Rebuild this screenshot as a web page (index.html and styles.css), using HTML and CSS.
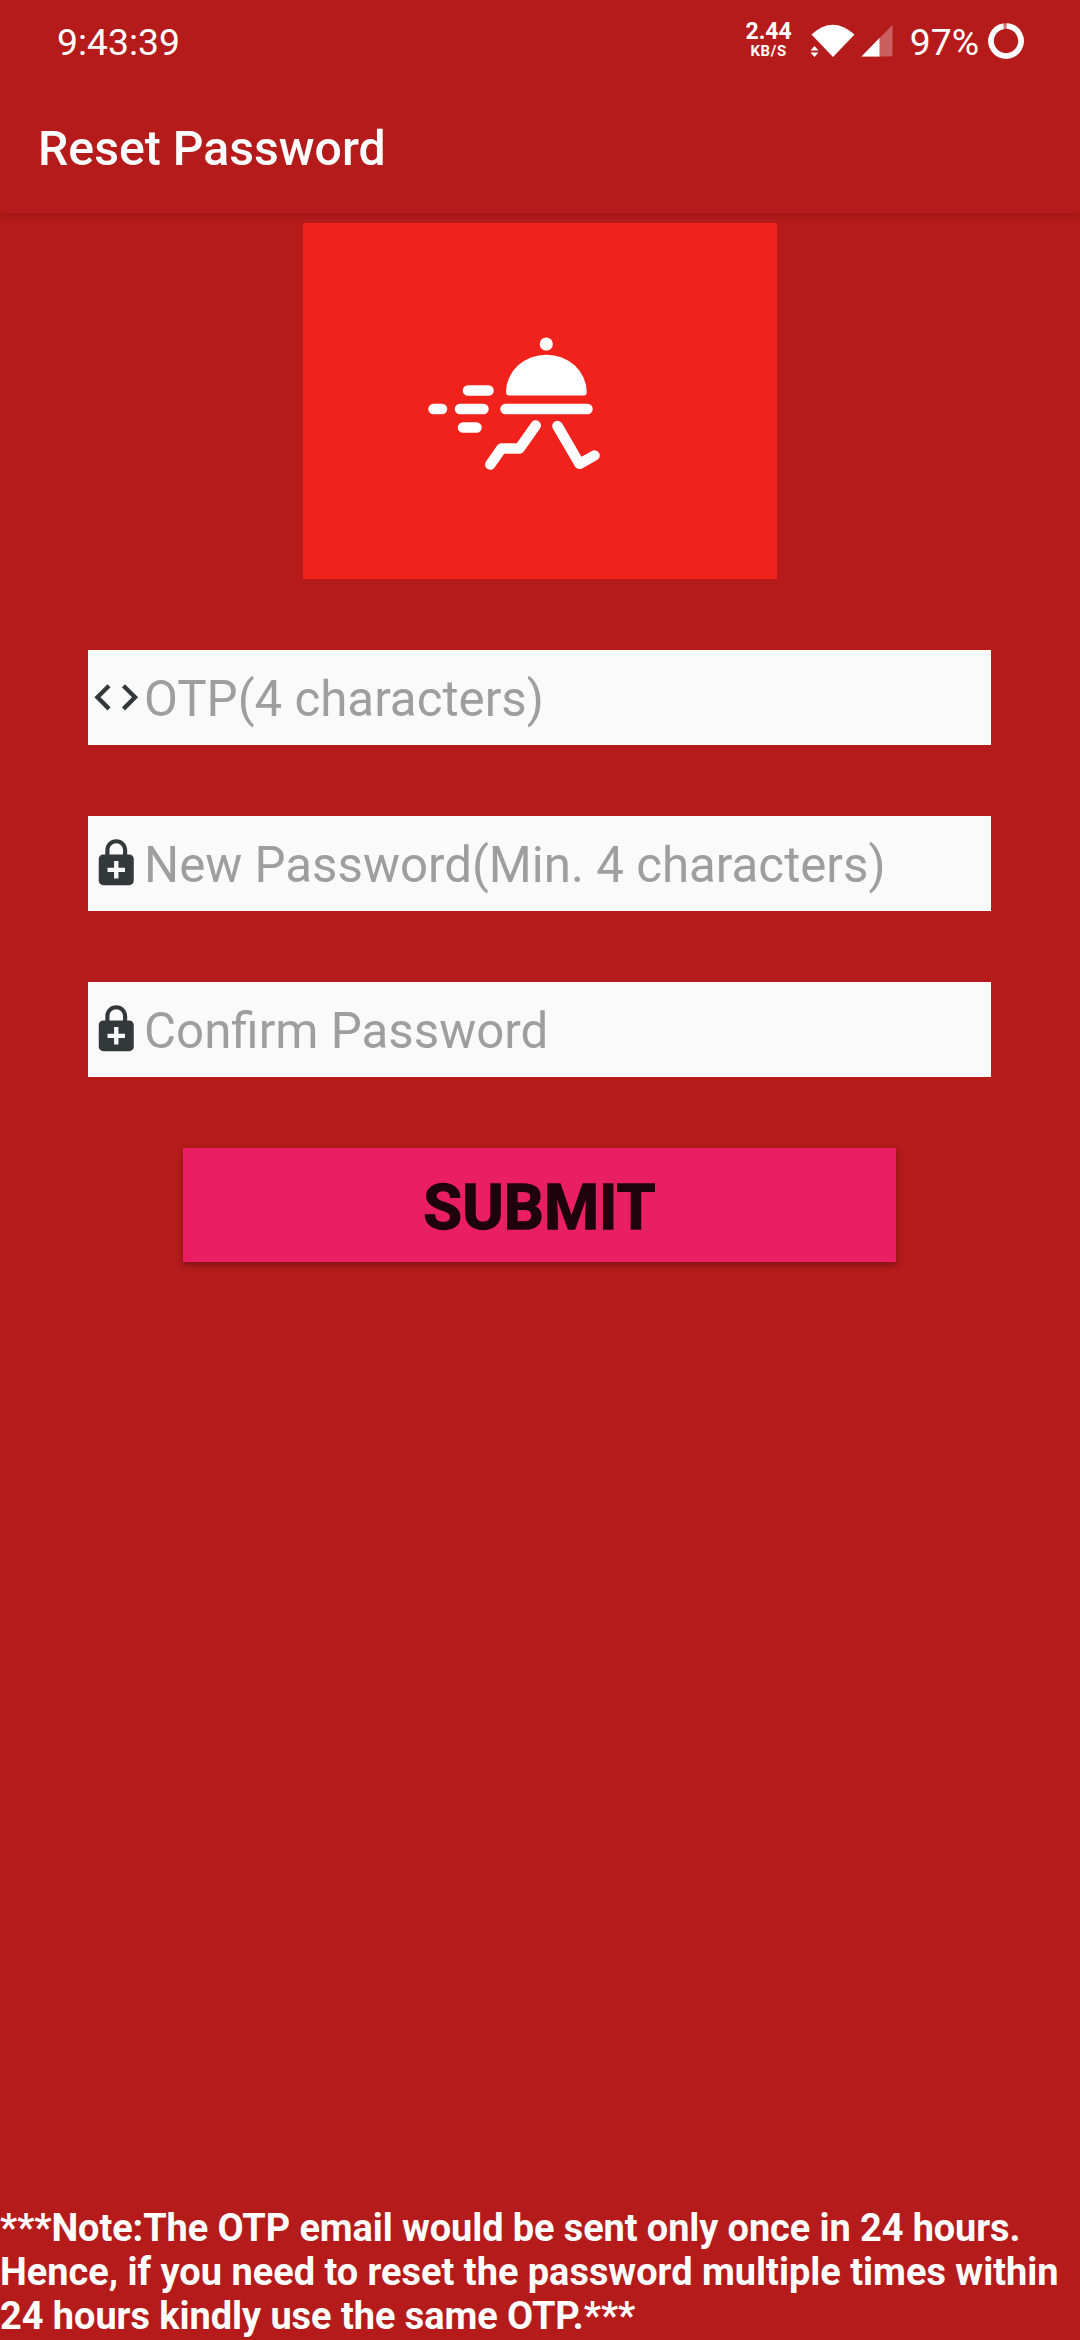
FILE: index.html
```html
<!DOCTYPE html>
<html lang="en">
<head>
<meta charset="utf-8">
<title>Reset Password</title>
<link rel="stylesheet" href="styles.css">
</head>
<body>
<div class="screen">
  <header class="top">
    <div class="status">
      <span class="clock">9:43:39</span>
      <div class="indicators">
        <div class="speed"><span class="speed-value">2.44</span><span class="speed-unit">KB/S</span></div>
        <svg class="wifi" width="46" height="34" viewBox="0 0 46 34" fill="#fff">
          <path d="M1.500 10.500Q22.500 -9 44.500 10.500L23 33Z"/>
          <path d="M0.500 26.500L4.500 22L8.500 26.500ZM0.500 28.500L4.500 33L8.500 28.500Z"/>
        </svg>
        <svg class="signal" width="32" height="32" viewBox="0 0 32 32">
          <path d="M31.500 0V29Q31.500 31.500 29 31.500H0.500Z" fill="#fff" opacity=".3"/>
          <path d="M18.500 13V31.500H0.500Z" fill="#fff"/>
        </svg>
        <span class="percent">97%</span>
        <svg class="battery" width="36" height="36" viewBox="0 0 36 36" fill="none" stroke="#fff" stroke-width="5.600">
          <circle cx="18" cy="18" r="15" opacity=".4"/>
          <path d="M18.700 3A15 15 0 1 1 15.500 3.200"/>
        </svg>
      </div>
    </div>
    <h1 class="title">Reset Password</h1>
  </header>
  <main class="content">
    <div class="logo">
      <svg width="474" height="356" viewBox="0 0 474 356" fill="none" stroke="#fff" stroke-width="10.500" stroke-linecap="round" stroke-linejoin="round">
        <circle cx="243.300" cy="121" r="6.600" fill="#fff" stroke="none"/>
        <path d="M206 172.500Q203 172.500 203 169A40.300 37.300 0 0 1 283.700 169Q283.700 172.500 281 172.500Z" fill="#fff" stroke="none"/>
        <path d="M202.500 186H284.500M165 167.500H185.500M157 186H180.500M130.500 186H139M160 204.500H173.500"/>
        <path d="M232.700 202.500L216.500 225.500H198.500L187.300 241.500M254.500 203L276.500 240.800L291.500 232.500"/>
      </svg>
    </div>
    <form class="form">
      <label class="field">
        <svg class="icon" viewBox="0 0 24 24"><path d="M9.400 16.600L4.800 12l4.600-4.600L8 6l-6 6 6 6 1.400-1.400zm5.200 0l4.600-4.600-4.600-4.600L16 6l6 6-6 6-1.400-1.400z"/></svg>
        <input class="input" type="text" placeholder="OTP(4 characters)">
      </label>
      <label class="field">
        <svg class="icon" viewBox="0 0 24 24"><path d="M18 8h-1V6c0-2.760-2.240-5-5-5S7 3.240 7 6v2H6c-1.100 0-2 .9-2 2v10c0 1.100.9 2 2 2h12c1.100 0 2-.9 2-2V10c0-1.100-.9-2-2-2zM8.900 6c0-1.710 1.390-3.100 3.100-3.100s3.100 1.390 3.100 3.100v2H8.900V6zM16 16h-3v3h-2v-3H8v-2h3v-3h2v3h3v2z"/></svg>
        <input class="input" type="text" placeholder="New Password(Min. 4 characters)">
      </label>
      <label class="field">
        <svg class="icon" viewBox="0 0 24 24"><path d="M18 8h-1V6c0-2.760-2.240-5-5-5S7 3.240 7 6v2H6c-1.100 0-2 .9-2 2v10c0 1.100.9 2 2 2h12c1.100 0 2-.9 2-2V10c0-1.100-.9-2-2-2zM8.900 6c0-1.710 1.390-3.100 3.100-3.100s3.100 1.390 3.100 3.100v2H8.900V6zM16 16h-3v3h-2v-3H8v-2h3v-3h2v3h3v2z"/></svg>
        <input class="input" type="text" placeholder="Confirm Password">
      </label>
      <button class="submit" type="button">SUBMIT</button>
    </form>
    <p class="note"><span class="tight">***Note:The OTP email would be sent only once in 24 hours.</span><br>Hence, if you need to reset the password multiple times within<br><span class="snug">24 hours kindly use the same OTP.***</span></p>
  </main>
</div>
</body>
</html>
```

FILE: styles.css
```css
* { box-sizing: border-box; }
body { margin: 0; background: #b51b1b; font-family: Roboto, "Noto Sans", sans-serif; color: #fff; }
.screen { width: 1080px; height: 2340px; display: flex; flex-direction: column; overflow: hidden; background: #b51b1b; }
.top { height: 213px; flex: none; box-shadow: 0 1px 8px rgba(0, 0, 0, .22); }
.status { height: 81px; padding: 0 56px 0 57px; display: flex; justify-content: space-between; align-items: center; }
.clock { font-size: 37.3px; line-height: 44px; padding-top: 2px; }
.indicators { display: flex; align-items: center; }
.speed { display: flex; flex-direction: column; align-items: center; font-weight: 700; margin-right: 18px; padding-bottom: 2px; }
.speed-value { font-size: 23px; line-height: 22px; }
.speed-unit { font-size: 15px; line-height: 16px; letter-spacing: .6px; }
.wifi { margin-right: 5px; }
.signal { margin-right: 17px; }
.percent { font-size: 37.3px; line-height: 44px; padding-top: 2px; margin-right: 9px; }
.title { margin: 0; padding: 40px 0 0 38px; font-size: 48.2px; line-height: 56px; font-weight: 500; }
.content { flex: 1; display: flex; flex-direction: column; align-items: center; padding-top: 10px; }
.logo { width: 474px; height: 356px; background: #f1211b; flex: none; }
.logo svg { display: block; }
.form { width: 903px; margin: 71px 1px 0 0; display: flex; flex-direction: column; gap: 71px; align-items: center; }
.field { width: 903px; height: 95px; background: #fafafa; display: flex; align-items: center; padding-left: 2px; }
.icon { width: 52.5px; height: 52.5px; fill: #33383b; flex: none; }
.input { flex: 1; min-width: 0; height: 95px; border: 0; outline: 0; background: none; padding: 3px 0 0 1.5px; font: 400 49.25px Roboto, sans-serif; color: #222; }
.input::placeholder { color: #9e9e9e; opacity: 1; }
.submit { width: 713px; height: 114px; border: 0; background: #ea1e63; color: #1e020c; font: 700 63px Roboto, sans-serif; -webkit-text-stroke: 1.3px #1e020c; padding: 4px 0 0; box-shadow: 0 3px 6px rgba(0, 0, 0, .3); }
.note { margin: auto 0 2px; width: 1080px; font-size: 37.93px; line-height: 44px; font-weight: 700; white-space: nowrap; }
.tight { letter-spacing: -.085px; }
.snug { letter-spacing: -.04px; }
```
